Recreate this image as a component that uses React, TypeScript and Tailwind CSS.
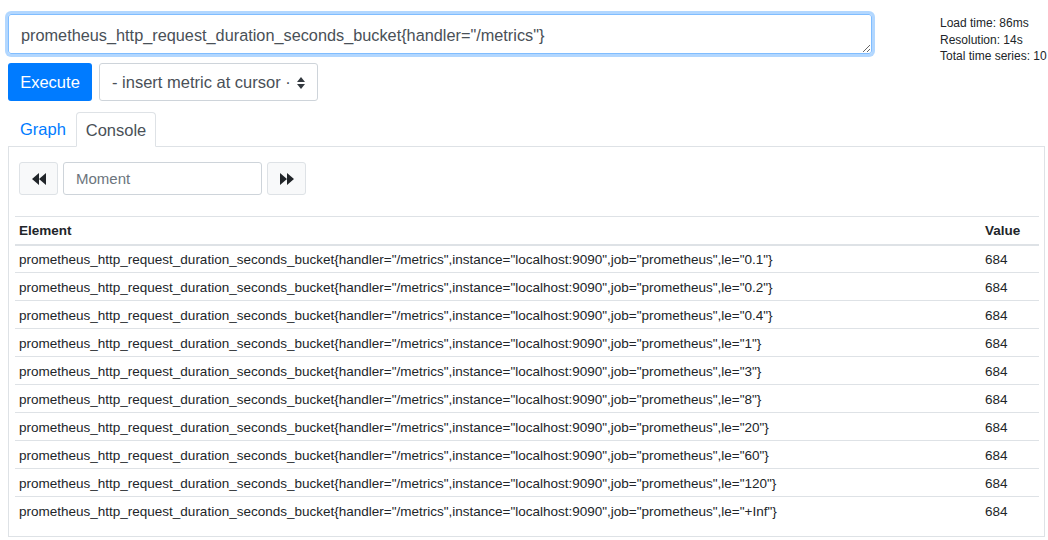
import React from 'react';

const query = 'prometheus_http_request_duration_seconds_bucket{handler="/metrics"}';

const buckets = ['0.1', '0.2', '0.4', '1', '3', '8', '20', '60', '120', '+Inf'];

const rows = buckets.map((le) => ({
    element: `prometheus_http_request_duration_seconds_bucket{handler="/metrics",instance="localhost:9090",job="prometheus",le="${le}"}`,
    value: '684',
}));

function Rewind() {
    return (
        <svg width="14" height="12" viewBox="0 0 14 12" aria-hidden="true">
            <path d="M7 0 L0 6 L7 12 Z M14 0 L7 6 L14 12 Z" fill="#212529" />
        </svg>
    );
}

function Forward() {
    return (
        <svg width="14" height="12" viewBox="0 0 14 12" aria-hidden="true">
            <path d="M0 0 L7 6 L0 12 Z M7 0 L14 6 L7 12 Z" fill="#212529" />
        </svg>
    );
}

export default function App() {
    return (
        <div className="w-[1048px] h-[540px] overflow-hidden bg-white text-[#212529]" style={{ fontFamily: '"Liberation Sans", Arial, sans-serif' }}>
            <div className="flex pt-[14px]">
                <div className="pl-[8px] w-[872px]">
                    <textarea
                        className="block w-[864px] h-[40px] resize-y rounded-[3px] border border-[#80bdff] px-[12px] pt-[6px] pb-[4px] text-[16.3px] leading-[28px] text-[#495057] outline-none ring-[3px] ring-[#007bff]/30"
                        defaultValue={query}
                        rows={1}
                    />
                    <div className="mt-[9px] flex gap-[7px]">
                        <button className="h-[38px] w-[84px] rounded-[3px] bg-[#007bff] pt-[1px] text-[16.5px] text-white">Execute</button>
                        <div className="flex h-[38px] w-[219px] items-center rounded-[3px] border border-[#ced4da] pl-[12px] pt-[1px] text-[16.5px] text-[#495057]">
                            <span>- insert metric at cursor ·</span>
                            <svg className="ml-[6px]" width="8" height="12" viewBox="0 0 8 12" aria-hidden="true">
                                <path d="M4 0 L8 5 L0 5 Z M0 7 L8 7 L4 12 Z" fill="#343a40" />
                            </svg>
                        </div>
                    </div>
                </div>
                <div className="ml-[68px] pt-[1px] whitespace-nowrap text-[12px] leading-[16.5px] text-[#212529]">
                    <div>Load time: 86ms</div>
                    <div>Resolution: 14s</div>
                    <div>Total time series: 10</div>
                </div>
            </div>

            <div className="mx-[8px] mt-[11px] w-[1037px]">
                <div className="flex h-[35px] border-b border-[#dee2e6]">
                    <div className="flex w-[68px] items-center pl-[12px] pt-[1px] text-[16.5px] text-[#007bff]">Graph</div>
                    <div className="-mb-px flex w-[80px] items-center justify-center rounded-t-[4px] border border-b-white border-[#dee2e6] bg-white pt-[1px] text-[16.5px] text-[#495057]">Console</div>
                </div>
                <div className="h-[390px] border border-t-0 border-[#dee2e6] px-[6px] pt-[15px]">
                    <div className="flex gap-[5px] pl-[4px]">
                        <button className="flex h-[33px] w-[39px] items-center justify-center rounded-[3px] border border-[#dee2e6] bg-[#f8f9fa]">
                            <Rewind />
                        </button>
                        <div className="flex h-[33px] w-[199px] items-center rounded-[3px] border border-[#ced4da] pl-[12px] pt-[1px] text-[15px] text-[#6c757d]">Moment</div>
                        <button className="flex h-[33px] w-[39px] items-center justify-center rounded-[3px] border border-[#dee2e6] bg-[#f8f9fa]">
                            <Forward />
                        </button>
                    </div>
                    <table className="mt-[21px] w-[1024px] border-collapse text-[13.5px]">
                        <thead>
                            <tr className="border-t border-b-2 border-t-[#dee2e6] border-b-[#dee2e6]">
                                <th className="h-[28px] pl-[4px] pt-[1px] text-left font-bold">Element</th>
                                <th className="h-[28px] w-[54px] pt-[1px] text-left font-bold">Value</th>
                            </tr>
                        </thead>
                        <tbody>
                            {rows.map((row, i) => (
                                <tr key={row.element} className={i === 0 ? '' : 'border-t border-[#dee2e6]'}>
                                    <td className="h-[28px] pl-[4px] pt-[3px]">{row.element}</td>
                                    <td className="h-[28px] pt-[3px]">{row.value}</td>
                                </tr>
                            ))}
                        </tbody>
                    </table>
                </div>
            </div>
        </div>
    );
}
